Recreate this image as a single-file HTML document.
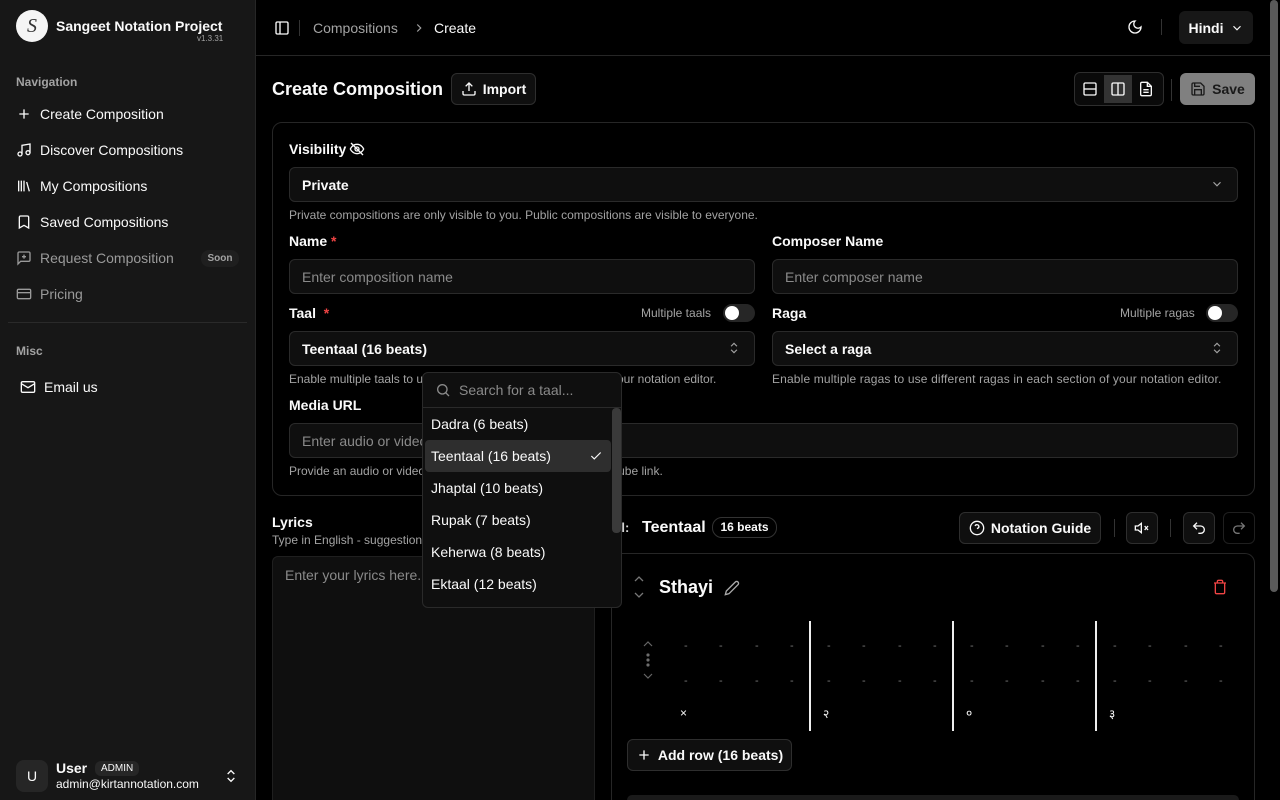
<!DOCTYPE html>
<html style="overflow:hidden;width:1280px;height:800px"><head><meta charset="utf-8"><style>
*{box-sizing:border-box;margin:0;padding:0}
body{width:1280px;height:800px;overflow:hidden;background:#000;color:#fafafa;font-family:"Liberation Sans","Noto Sans CJK SC",sans-serif;font-size:14px;position:relative}
.a{position:absolute}
svg{display:block}
.sb{left:0;top:0;width:256px;height:800px;background:#171717;border-right:1px solid #262626}
.nav{left:16px;display:flex;align-items:center;gap:8px;font-size:14px;color:#fafafa}
.lbl{font-size:12px;color:#a3a3a3;font-weight:bold}
.inp{background:#0f0f0f;border:1px solid #2a2a2a;border-radius:6px;height:35px;display:flex;align-items:center;padding:0 12px;font-size:14px}
.ph{color:#8a8a8a}
.help{font-size:12px;color:#a3a3a3}
.fl{font-size:14px;font-weight:bold}
.btn{background:#0f0f0f;border:1px solid #2e2e2e;border-radius:6px;display:flex;align-items:center;justify-content:center;gap:6px;font-weight:bold;font-size:14px}
.tog{width:32px;height:18px;border-radius:9px;background:#262626}
.tog:after{content:"";position:absolute;left:2px;top:2px;width:14px;height:14px;border-radius:50%;background:#fff}
.dash{color:#777;font-size:11px}
</style></head><body>
<div class="a sb"></div>
<div class="a" style="left:16px;top:10px;width:32px;height:32px;border-radius:50%;background:#f5f5f5;color:#333;font-family:'Liberation Serif',serif;font-style:italic;font-size:20px;text-align:center;line-height:32px">S</div>
<div class="a" style="left:56px;top:18px;font-weight:bold;font-size:14px">Sangeet Notation Project</div>
<div class="a" style="left:197px;top:34px;font-size:8px;color:#a3a3a3">v1.3.31</div>
<div class="a lbl" style="left:16px;top:75px">Navigation</div>
<div class="a nav" style="top:106px"><svg width="16" height="16" viewBox="0 0 24 24" fill="none" stroke="#fafafa" stroke-width="2"><path d="M12 5v14M5 12h14"/></svg>Create Composition</div>
<div class="a nav" style="top:142px"><svg width="16" height="16" viewBox="0 0 24 24" fill="none" stroke="#fafafa" stroke-width="2"><path d="M9 18V5l12-2v13"/><circle cx="6" cy="18" r="3"/><circle cx="18" cy="16" r="3"/></svg>Discover Compositions</div>
<div class="a nav" style="top:178px"><svg width="16" height="16" viewBox="0 0 24 24" fill="none" stroke="#fafafa" stroke-width="2"><path d="M4 4v16M8 4v16M12 4v16M16 6l4 14"/></svg>My Compositions</div>
<div class="a nav" style="top:214px"><svg width="16" height="16" viewBox="0 0 24 24" fill="none" stroke="#fafafa" stroke-width="2"><path d="M19 21l-7-4-7 4V5a2 2 0 0 1 2-2h10a2 2 0 0 1 2 2z"/></svg>Saved Compositions</div>
<div class="a nav" style="top:250px;color:#9a9a9a"><svg width="16" height="16" viewBox="0 0 24 24" fill="none" stroke="#9a9a9a" stroke-width="2"><path d="M21 15a2 2 0 0 1-2 2H7l-4 4V5a2 2 0 0 1 2-2h14a2 2 0 0 1 2 2z"/><path d="M12 7v6M9 10h6"/></svg>Request Composition</div>
<div class="a" style="left:201px;top:250px;width:38px;height:17px;border-radius:8px;background:#1f1f1f;color:#a3a3a3;font-size:10px;text-align:center;line-height:17px;font-weight:bold">Soon</div>
<div class="a nav" style="top:286px;color:#9a9a9a"><svg width="16" height="16" viewBox="0 0 24 24" fill="none" stroke="#9a9a9a" stroke-width="2"><rect x="2" y="5" width="20" height="14" rx="2"/><path d="M2 10h20"/></svg>Pricing</div>
<div class="a" style="left:8px;top:322px;width:239px;height:1px;background:#2a2a2a"></div>
<div class="a lbl" style="left:16px;top:344px">Misc</div>
<div class="a nav" style="top:379px;left:20px"><svg width="16" height="16" viewBox="0 0 24 24" fill="none" stroke="#fafafa" stroke-width="2"><rect x="2" y="4" width="20" height="16" rx="2"/><path d="M22 7l-10 6L2 7"/></svg>Email us</div>
<div class="a" style="left:16px;top:760px;width:32px;height:32px;border-radius:8px;background:#262626;text-align:center;line-height:32px;font-size:14px">U</div>
<div class="a" style="left:56px;top:760px;font-weight:bold;font-size:14px">User</div>
<div class="a" style="left:95px;top:761px;padding:0 6px;height:15px;border-radius:6px;background:#262626;font-size:10px;line-height:15px">ADMIN</div>
<div class="a" style="left:56px;top:777px;font-size:12px">admin@kirtannotation.com</div>
<svg class="a" style="left:223px;top:768px" width="16" height="16" viewBox="0 0 24 24" fill="none" stroke="#fafafa" stroke-width="2"><path d="M7 9l5-5 5 5M7 15l5 5 5-5"/></svg>

<div class="a" style="left:256px;top:55px;width:1014px;height:1px;background:#262626"></div>
<svg class="a" style="left:274px;top:20px" width="16" height="16" viewBox="0 0 24 24" fill="none" stroke="#fafafa" stroke-width="2"><rect x="3" y="3" width="18" height="18" rx="2"/><path d="M9 3v18"/></svg>
<div class="a" style="left:299px;top:20px;width:1px;height:16px;background:#333"></div>
<div class="a" style="left:313px;top:20px;color:#a3a3a3;font-size:14px">Compositions</div>
<svg class="a" style="left:412px;top:21px" width="14" height="14" viewBox="0 0 24 24" fill="none" stroke="#a3a3a3" stroke-width="2"><path d="M9 6l6 6-6 6"/></svg>
<div class="a" style="left:434px;top:20px;font-size:14px">Create</div>
<svg class="a" style="left:1127px;top:19px" width="16" height="16" viewBox="0 0 24 24" fill="none" stroke="#fafafa" stroke-width="2"><path d="M12 3a6 6 0 0 0 9 9 9 9 0 1 1-9-9z"/></svg>
<div class="a" style="left:1161px;top:19px;width:1px;height:16px;background:#333"></div>
<div class="a btn" style="left:1179px;top:11px;width:74px;height:33px;background:#171717;border:none;font-weight:bold">Hindi <svg width="14" height="14" viewBox="0 0 24 24" fill="none" stroke="#fafafa" stroke-width="2"><path d="M6 9l6 6 6-6"/></svg></div>
<div class="a" style="left:1270px;top:0;width:8px;height:592px;background:#5a5a5a;border-radius:4px"></div>

<div class="a" style="left:272px;top:79px;font-size:18px;font-weight:bold">Create Composition</div>
<div class="a btn" style="left:451px;top:73px;width:85px;height:32px"><svg width="16" height="16" viewBox="0 0 24 24" fill="none" stroke="#fafafa" stroke-width="2"><path d="M21 15v4a2 2 0 0 1-2 2H5a2 2 0 0 1-2-2v-4M17 8l-5-5-5 5M12 3v12"/></svg>Import</div>
<div class="a" style="left:1074px;top:72px;width:90px;height:34px;border:1px solid #2e2e2e;border-radius:6px;background:#0a0a0a"></div>
<div class="a" style="left:1104px;top:75px;width:28px;height:28px;background:#333"></div>
<svg class="a" style="left:1082px;top:81px" width="16" height="16" viewBox="0 0 24 24" fill="none" stroke="#fafafa" stroke-width="2"><rect x="3" y="3" width="18" height="18" rx="2"/><path d="M3 12h18"/></svg>
<svg class="a" style="left:1110px;top:81px" width="16" height="16" viewBox="0 0 24 24" fill="none" stroke="#fafafa" stroke-width="2"><rect x="3" y="3" width="18" height="18" rx="2"/><path d="M12 3v18"/></svg>
<svg class="a" style="left:1138px;top:81px" width="16" height="16" viewBox="0 0 24 24" fill="none" stroke="#fafafa" stroke-width="2"><path d="M14 2H6a2 2 0 0 0-2 2v16a2 2 0 0 0 2 2h12a2 2 0 0 0 2-2V8z"/><path d="M14 2v6h6M8 13h8M8 17h8"/></svg>
<div class="a" style="left:1171px;top:79px;width:1px;height:22px;background:#333"></div>
<div class="a btn" style="left:1180px;top:73px;width:75px;height:32px;background:#808080;border:none;color:#1a1a1a"><svg width="16" height="16" viewBox="0 0 24 24" fill="none" stroke="#1a1a1a" stroke-width="2"><path d="M19 21H5a2 2 0 0 1-2-2V5a2 2 0 0 1 2-2h11l5 5v11a2 2 0 0 1-2 2z"/><path d="M17 21v-8H7v8M7 3v5h8"/></svg>Save</div>

<div class="a" style="left:272px;top:122px;width:983px;height:374px;border:1px solid #262626;border-radius:10px;background:#000"></div>
<div class="a fl" style="left:289px;top:141px">Visibility</div>
<svg class="a" style="left:349px;top:141px" width="16" height="16" viewBox="0 0 24 24" fill="none" stroke="#fafafa" stroke-width="2"><path d="M2 12s3-7 10-7 10 7 10 7-3 7-10 7S2 12 2 12z"/><circle cx="12" cy="12" r="3"/><path d="M3 3l18 18"/></svg>
<div class="a inp" style="left:289px;top:167px;width:949px;font-weight:bold">Private</div>
<svg class="a" style="left:1210px;top:177px" width="14" height="14" viewBox="0 0 24 24" fill="none" stroke="#a3a3a3" stroke-width="2"><path d="M6 9l6 6 6-6"/></svg>
<div class="a help" style="left:289px;top:208px">Private compositions are only visible to you. Public compositions are visible to everyone.</div>
<div class="a fl" style="left:289px;top:233px">Name <span style="color:#ef4444">*</span></div>
<div class="a inp ph" style="left:289px;top:259px;width:466px">Enter composition name</div>
<div class="a fl" style="left:772px;top:233px">Composer Name</div>
<div class="a inp ph" style="left:772px;top:259px;width:466px">Enter composer name</div>
<div class="a fl" style="left:289px;top:305px">Taal &nbsp;<span style="color:#ef4444">*</span></div>
<div class="a" style="left:641px;top:306px;font-size:12px;color:#a3a3a3">Multiple taals</div>
<div class="a tog" style="left:723px;top:304px"></div>
<div class="a inp" style="left:289px;top:331px;width:466px;font-weight:bold">Teentaal (16 beats)</div>
<svg class="a" style="left:727px;top:341px" width="14" height="14" viewBox="0 0 24 24" fill="none" stroke="#a3a3a3" stroke-width="2"><path d="M7 9l5-5 5 5M7 15l5 5 5-5"/></svg>
<div class="a help" style="left:289px;top:372px">Enable multiple taals to use different taals in each section of your notation editor.</div>
<div class="a fl" style="left:772px;top:305px">Raga</div>
<div class="a" style="left:1120px;top:306px;font-size:12px;color:#a3a3a3">Multiple ragas</div>
<div class="a tog" style="left:1206px;top:304px"></div>
<div class="a inp" style="left:772px;top:331px;width:466px;font-weight:bold">Select a raga</div>
<svg class="a" style="left:1210px;top:341px" width="14" height="14" viewBox="0 0 24 24" fill="none" stroke="#a3a3a3" stroke-width="2"><path d="M7 9l5-5 5 5M7 15l5 5 5-5"/></svg>
<div class="a help" style="left:772px;top:372px;letter-spacing:0.15px">Enable multiple ragas to use different ragas in each section of your notation editor.</div>
<div class="a fl" style="left:289px;top:397px">Media URL</div>
<div class="a inp ph" style="left:289px;top:423px;width:949px">Enter audio or video URL</div>
<div class="a help" style="left:289px;top:464px">Provide an audio or video link, such as a SoundCloud or YouTube link.</div>

<div class="a fl" style="left:272px;top:514px">Lyrics</div>
<div class="a help" style="left:272px;top:533px">Type in English - suggestions will appear</div>
<div class="a" style="left:272px;top:556px;width:323px;height:244px;background:#0f0f0f;border-radius:6px 6px 0 0;border:1px solid #1f1f1f;border-bottom:none;padding:10px 12px;color:#8a8a8a;font-size:14px">Enter your lyrics here...</div>

<div class="a" style="left:600px;top:520px;font-size:13px;color:#d4d4d4;font-weight:bold">Taal:</div>
<div class="a" style="left:642px;top:519px;font-size:16px;font-weight:bold">Teentaal</div>
<div class="a" style="left:712px;top:517px;width:65px;height:21px;border:1px solid #333;border-radius:10px;font-size:12px;font-weight:bold;text-align:center;line-height:19px">16 beats</div>
<div class="a btn" style="left:959px;top:512px;width:142px;height:32px"><svg width="16" height="16" viewBox="0 0 24 24" fill="none" stroke="#fafafa" stroke-width="2"><circle cx="12" cy="12" r="10"/><path d="M9.1 9a3 3 0 0 1 5.8 1c0 2-3 3-3 3M12 17h.01"/></svg>Notation Guide</div>
<div class="a" style="left:1114px;top:519px;width:1px;height:18px;background:#333"></div>
<div class="a btn" style="left:1126px;top:512px;width:32px;height:32px"><svg width="16" height="16" viewBox="0 0 24 24" fill="none" stroke="#fafafa" stroke-width="2"><path d="M11 5L6 9H2v6h4l5 4z"/><path d="M16 9l5 6M21 9l-5 6"/></svg></div>
<div class="a" style="left:1170px;top:519px;width:1px;height:18px;background:#333"></div>
<div class="a btn" style="left:1183px;top:512px;width:32px;height:32px"><svg width="16" height="16" viewBox="0 0 24 24" fill="none" stroke="#fafafa" stroke-width="2"><path d="M9 14L4 9l5-5"/><path d="M4 9h10.5a5.5 5.5 0 0 1 0 11H11"/></svg></div>
<div class="a btn" style="left:1223px;top:512px;width:32px;height:32px;background:#000;border-color:#1f1f1f"><svg width="16" height="16" viewBox="0 0 24 24" fill="none" stroke="#777" stroke-width="2"><path d="M15 14l5-5-5-5"/><path d="M20 9H9.5a5.5 5.5 0 0 0 0 11H13"/></svg></div>
<div class="a" style="left:611px;top:553px;width:644px;height:247px;border:1px solid #262626;border-bottom:none;border-radius:10px 10px 0 0"></div>
<svg class="a" style="left:632px;top:573px" width="14" height="28" viewBox="0 0 14 28" fill="none" stroke="#777" stroke-width="1.3"><path d="M3 8l4-4 4 4M3 20l4 4 4-4"/></svg>
<div class="a" style="left:659px;top:577px;font-size:18px;font-weight:bold">Sthayi</div>
<svg class="a" style="left:724px;top:580px" width="16" height="16" viewBox="0 0 24 24" fill="none" stroke="#aaa" stroke-width="2"><path d="M17 3a2.8 2.8 0 1 1 4 4L7.5 20.5 2 22l1.5-5.5z"/></svg>
<svg class="a" style="left:1212px;top:579px" width="16" height="16" viewBox="0 0 24 24" fill="none" stroke="#ef4444" stroke-width="2"><path d="M3 6h18M19 6v14a2 2 0 0 1-2 2H7a2 2 0 0 1-2-2V6M8 6V4a2 2 0 0 1 2-2h4a2 2 0 0 1 2 2v2"/></svg>
<svg class="a" style="left:640px;top:638px" width="16" height="46" viewBox="0 0 16 46" fill="none" stroke="#666" stroke-width="1.2"><path d="M4 8l4-4 4 4M4 36l4 4 4-4"/><circle cx="8" cy="17" r="1" fill="#aaa"/><circle cx="8" cy="22" r="1" fill="#aaa"/><circle cx="8" cy="27" r="1" fill="#aaa"/></svg>
<div class="a" style="left:809px;top:621px;width:2px;height:110px;background:#eee"></div>
<div class="a" style="left:952px;top:621px;width:2px;height:110px;background:#eee"></div>
<div class="a" style="left:1095px;top:621px;width:2px;height:110px;background:#eee"></div>
<div id="dashes"></div>
<div class="a" style="left:680px;top:706px;font-size:12px">×</div>
<div class="a" style="left:823px;top:705px;font-size:12px">२</div>
<div class="a" style="left:966px;top:704px;font-size:12px">०</div>
<div class="a" style="left:1109px;top:705px;font-size:12px">३</div>
<div class="a btn" style="left:627px;top:739px;width:165px;height:32px"><svg width="16" height="16" viewBox="0 0 24 24" fill="none" stroke="#fafafa" stroke-width="2"><path d="M12 5v14M5 12h14"/></svg>Add row (16 beats)</div>
<div class="a" style="left:627px;top:795px;width:612px;height:5px;background:#1a1a1a;border-radius:8px 8px 0 0"></div>

<div class="a" style="left:422px;top:372px;width:200px;height:236px;background:#0f0f0f;border:1px solid #2a2a2a;border-radius:6px"></div>
<svg class="a" style="left:435px;top:382px" width="16" height="16" viewBox="0 0 24 24" fill="none" stroke="#8a8a8a" stroke-width="2"><circle cx="11" cy="11" r="7"/><path d="M21 21l-5-5"/></svg>
<div class="a ph" style="left:459px;top:382px;font-size:14px">Search for a taal...</div>
<div class="a" style="left:423px;top:407px;width:198px;height:1px;background:#2a2a2a"></div>
<div class="a" style="left:612px;top:408px;width:9px;height:125px;background:#3a3a3a;border-radius:4px"></div>
<div class="a" style="left:425px;top:440px;width:186px;height:32px;background:#2e2e2e;border-radius:4px"></div>
<div class="a" style="left:431px;top:416px">Dadra (6 beats)</div>
<div class="a" style="left:431px;top:448px">Teentaal (16 beats)</div>
<svg class="a" style="left:589px;top:449px" width="14" height="14" viewBox="0 0 24 24" fill="none" stroke="#fafafa" stroke-width="2"><path d="M20 6L9 17l-5-5"/></svg>
<div class="a" style="left:431px;top:480px">Jhaptal (10 beats)</div>
<div class="a" style="left:431px;top:512px">Rupak (7 beats)</div>
<div class="a" style="left:431px;top:544px">Keherwa (8 beats)</div>
<div class="a" style="left:431px;top:576px">Ektaal (12 beats)</div>
<script>
var h='';var xs=[684,719,755,790];
for(var g=0;g<4;g++)for(var i=0;i<4;i++){var x=xs[i]+g*143;
h+='<div class="a dash" style="left:'+x+'px;top:640px">-</div><div class="a dash" style="left:'+x+'px;top:675px">-</div>';}
document.getElementById('dashes').innerHTML=h;
</script>
</body></html>
